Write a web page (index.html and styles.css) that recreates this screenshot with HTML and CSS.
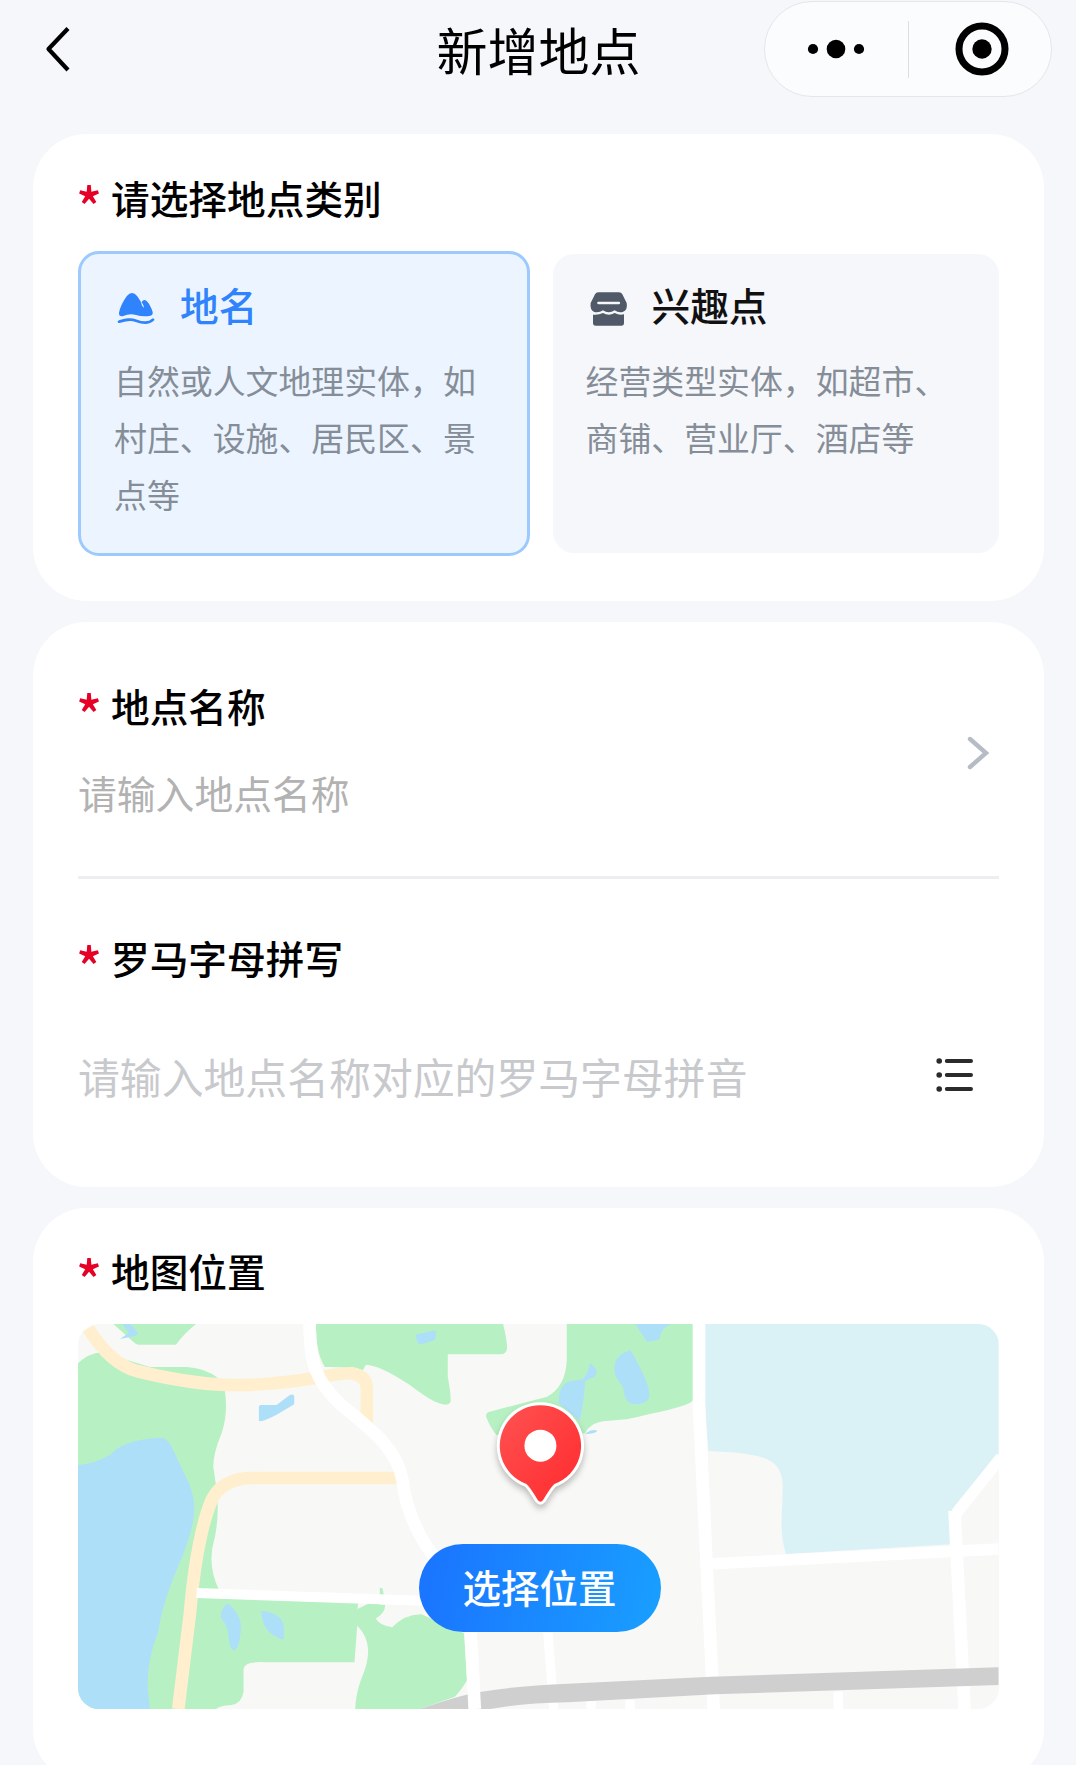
FILE: index.html
```html
<!DOCTYPE html>
<html lang="zh-CN">
<head>
    <meta charset="UTF-8">
    <meta name="viewport" content="width=device-width, initial-scale=1.0">
    <title>新增地点</title>
    <link rel="stylesheet" href="styles.css">
</head>
<body>
    <div class="page">
        <header class="navbar">
            <svg class="back" viewBox="0 0 40 60">
                <path d="M31 9.5L11.5 30L31 51" />
            </svg>
            <h1>新增地点</h1>
            <div class="capsule">
                <svg class="capsule-more" viewBox="0 0 60 60">
                    <circle cx="7" cy="30" r="5.1" />
                    <circle cx="30" cy="30" r="9.3" />
                    <circle cx="53" cy="30" r="5.1" />
                </svg>
                <span class="capsule-line"></span>
                <svg class="capsule-close" viewBox="0 0 60 60">
                    <circle class="ring" cx="30" cy="30" r="23" />
                    <circle cx="30" cy="30" r="9.7" />
                </svg>
            </div>
        </header>

        <section class="card card-type">
            <h2 class="label"><span class="required">*</span>请选择地点类别</h2>
            <div class="types">
                <div class="type active">
                    <div class="type-title">
                        <svg class="type-icon" viewBox="42 37 132 132">
                            <path d="M57 129Q62 105 80 80Q96 60 112 80L123 97Q126 112 132 114Q131 106 125 98Q130 87 139 93Q151 104 158 127Q160 138 148 139Q125 141 108 136Q88 131 70 139Q56 142 57 129Z" />
                            <path class="wave" d="M57 156C75 151 90 146 108 153S145 164 159 150" />
                        </svg>
                        <h3>地名</h3>
                    </div>
                    <p>自然或人文地理实体，如村庄、设施、居民区、景点等</p>
                </div>
                <div class="type">
                    <div class="type-title">
                        <svg class="type-icon" viewBox="45 37 132 132">
                            <path d="M82 68H144Q151 68 154 74L167 100Q171 121 155 127Q142 130 131 122Q113 134 96 122Q84 130 70 127Q56 121 59 100L72 74Q75 68 82 68Z" />
                            <path d="M66 135Q82 137 96 130Q113 140 131 130Q145 138 159 134V160Q159 168 151 168H74Q66 168 66 160Z" />
                            <path class="slot" d="M82 100H144" />
                        </svg>
                        <h3>兴趣点</h3>
                    </div>
                    <p>经营类型实体，如超市、商铺、营业厅、酒店等</p>
                </div>
            </div>
        </section>

        <section class="card card-name">
            <div class="field">
                <div>
                    <h2 class="label"><span class="required">*</span>地点名称</h2>
                    <div class="placeholder">请输入地点名称</div>
                </div>
                <svg class="arrow" viewBox="0 0 40 48">
                    <path d="M11 10L27 24L11 38" />
                </svg>
            </div>
            <h2 class="label label-roman"><span class="required">*</span>罗马字母拼写</h2>
            <div class="input-row">
                <input type="text" placeholder="请输入地点名称对应的罗马字母拼音">
                <svg class="list-icon" viewBox="0 0 44 44">
                    <circle cx="6.2" cy="8" r="2.8" />
                    <circle cx="6.2" cy="22" r="2.8" />
                    <circle cx="6.2" cy="36" r="2.8" />
                    <path d="M13.8 8H38M13.8 22H38M13.8 36H38" />
                </svg>
            </div>
        </section>

        <section class="card card-map">
            <h2 class="label"><span class="required">*</span>地图位置</h2>
            <div class="map">
                <svg class="map-image" viewBox="54 312 2763 1155" preserveAspectRatio="none">
                    <defs>
                        <linearGradient id="pinFill" x1="0" y1="0" x2="1" y2="1">
                            <stop offset="0" stop-color="#ff5252" />
                            <stop offset="1" stop-color="#ff2a2d" />
                        </linearGradient>
                    </defs>

                    <!-- 绿地 -->
                    <g class="green">
                        <path d="M160 312L225 370Q230 374 236 374H348Q370 343 408 312Z" />
                        <path d="M54 430Q85 400 125 397L270 441H380Q440 445 475 475L495 512Q505 580 485 640Q460 700 460 740Q470 800 473 850Q475 900 465 950Q440 1030 475 1105V1135L895 1148L893 1167L930 1149L976 1155Q976 1180 948 1195Q955 1215 997 1222Q1035 1183 1085 1183L1213 1240L1222 1380Q1205 1410 1185 1430L1080 1467H886Q888 1420 905 1375Q925 1330 925 1290Q922 1245 892 1217L884 1327H620Q550 1322 551 1350V1415Q545 1450 515 1455Q480 1457 468 1467H54Z" />
                        <path d="M768 312H1330Q1342 360 1342 385Q1340 403 1322 403H1164V470Q1175 530 1172 545Q1165 562 1130 547Q1110 540 1050 495Q960 435 918 434L910 450Q860 440 795 441Q768 400 768 312Z" />
                        <path d="M1521 312V420Q1518 500 1462 530L1290 575Q1277 578 1279 590Q1290 620 1310 645L1576 640Q1590 610 1630 604L1700 598Q1740 590 1770 582Q1895 557 1900 540V312Z" />
                        <path d="M960 1103L968 1105L972 1125H960Z" />
                    </g>

                    <!-- 水域 -->
                    <g class="water">
                        <path d="M54 735Q100 733 150 705Q190 658 300 653Q320 652 335 680L385 785Q410 840 400 900Q390 960 350 1050Q305 1160 295 1235Q258 1330 264 1410L270 1467H54Z" />
                        <path d="M180 357L207 338L187 312H212L235 340L228 347Z" />
                        <path d="M597 560Q597 555 603 555H650L690 525Q703 520 703 532V553L650 584Q620 600 602 604Q597 604 597 600Z" />
                        <path d="M1068 352Q1067 343 1075 342L1118 332Q1130 330 1129 340L1127 355Q1126 361 1118 363L1085 373Q1075 374 1074 368Z" />
                        <path d="M500 1151Q480 1170 483 1195Q502 1215 505 1240Q508 1290 522 1291Q542 1285 543 1215Q540 1185 515 1160Q508 1150 500 1151Z" />
                        <path d="M604 1172Q672 1180 672 1225V1258Q665 1261 650 1250C620 1238 605 1210 604 1172Z" />
                        <path d="M1727 312L1762 365Q1795 364 1800 355Q1803 325 1834 312Z" />
                        <path d="M1712 390Q1664 405 1664 445C1664 475 1680 485 1689 500C1696 520 1690 553 1733 553Q1772 550 1769 520Q1765 480 1712 390Z" />
                        <path d="M1591 430Q1622 450 1604 472Q1580 478 1576 487Q1574 540 1560 602L1497 550Q1495 500 1525 485L1568 478Q1584 465 1591 430Z" />
                        <path d="M1576 642Q1595 625 1613 632Q1610 641 1576 642Z" />
                    </g>
                    <path class="lake" d="M1920 312H2817V702L2672 973L2179 1002C2155 920 2172 870 2169 790C2165 710 2100 700 1946 693Z" />

                    <!-- 道路 -->
                    <g class="road-yellow">
                        <path d="M85 325Q150 430 230 453Q380 490 500 495Q620 498 760 475C830 464 850 458 875 460Q921 468 921 505V625" />
                        <path d="M1010 774H600Q490 768 455 840Q410 950 390 1180L355 1467" />
                    </g>
                    <g class="land">
                        <path d="M2700 867L2817 712V972L2700 975Z" />
                    </g>
                    <g class="road-white">
                        <path d="M749 312C751 420 760 480 850 560C950 640 1010 690 1028 780Q1043 910 1130 1020" />
                        <path d="M1918 312V560L1962 1467" />
                        <path d="M1464 1230L1482 1467" stroke-width="28" />
                        <path d="M1594 1440V1467M1711 1440V1467M2336 1415V1467" stroke-width="28" />
                        <path d="M410 1119L1090 1142" stroke-width="30" />
                        <path d="M1945 1032L2817 987" stroke-width="34" />
                        <path d="M2685 872L2715 1467" />
                        <path d="M2690 880L2825 712" stroke-width="34" />
                    </g>
                    <path class="railway" d="M1080 1467Q1200 1425 1265 1415Q1380 1397 1525 1391L1954 1370L2817 1342V1395L1967 1423L1525 1447Q1380 1450 1291 1467Z" />
                    <path class="road-front" d="M1232 1230L1245 1467" />

                    <g class="pin">
                        <path d="M1400 792A122 122 0 1 1 1484 792Q1474 800 1450 840Q1442 850 1434 840Q1410 800 1400 792Z" />
                        <circle cx="1442" cy="677" r="48" />
                    </g>
                </svg>
                <button class="map-button">选择位置</button>
            </div>
        </section>
    </div>
</body>
</html>
```
FILE: styles.css
```css
:root {
    --page-bg: #f5f7fa;
    --blue: #2f83fd;
    --gray-text: #858d98;
}

* {
    box-sizing: border-box;
}

body {
    margin: 0;
    background: #fff;
    color: #000;
    font-family: 'Noto Sans CJK SC', sans-serif;
}

h1, h2, h3, p {
    margin: 0;
    font-weight: 400;
}

svg {
    display: block;
}

.page {
    width: 1076px;
    height: 1765px;
    padding: 0 33px;
    background: var(--page-bg);
    overflow: hidden;
}

/* 顶部导航 */
.navbar {
    display: grid;
    grid-template-columns: 399.5px 1fr auto;
    align-items: center;
    height: 98px;
    margin: 0 -9px 36px 4px;
}

.navbar h1 {
    padding-bottom: 1px;
    font-size: 51px;
    line-height: 74px;
}

.back {
    width: 40px;
    height: 60px;
    fill: none;
    stroke: #000;
    stroke-width: 4.2;
    stroke-linejoin: round;
}

.capsule {
    display: flex;
    align-items: center;
    justify-self: end;
    width: 288px;
    height: 96px;
    padding: 0 39px 0 41px;
    border: 1.5px solid #e4e6e9;
    border-radius: 48px;
    background: #fbfcfe;
}

.capsule svg {
    width: 60px;
    height: 60px;
}

.capsule-line {
    width: 1px;
    height: 57px;
    margin: 0 43px 0 42px;
    background: #dcdee1;
}

.ring {
    fill: none;
    stroke: #000;
    stroke-width: 7;
}

/* 卡片 */
.card {
    width: 1010.5px;
    padding: 0 45px;
    margin-bottom: 21px;
    border-radius: 54px;
    background: #fff;
}

.card-type {
    height: 467px;
    padding-top: 35px;
}

.card-name {
    height: 565px;
    padding-top: 55px;
}

.card-map {
    height: 575px;
    padding-top: 34px;
}

.label {
    display: flex;
    font-size: 38.7px;
    font-weight: 500;
    line-height: 56px;
}

.required {
    width: 33px;
    height: 56px;
    padding-top: 8px;
    color: #e60026;
    font-size: 54px;
    font-weight: 500;
    text-indent: -2px;
}

.types {
    display: grid;
    grid-template-columns: 452px 1fr;
    gap: 22.5px;
    align-items: center;
    height: 305px;
    margin-top: 26px;
}

.type {
    height: 299px;
    padding: 25px 33px 0;
    border-radius: 21px;
    background: var(--page-bg);
}

.type.active {
    height: 305px;
    border: 3px solid #9ccafd;
    background: #ecf5ff;
}

.type-title {
    display: flex;
    align-items: center;
    gap: 22px;
    height: 50px;
    margin-bottom: 23px;
}

.type-title h3 {
    color: #111;
    font-size: 38.7px;
    font-weight: 500;
    line-height: 50px;
}

.type.active h3 {
    color: var(--blue);
}

.type-icon {
    width: 44px;
    height: 44px;
    fill: #505967;
}

.active .type-icon {
    fill: var(--blue);
}

.type-icon .wave {
    fill: none;
    stroke: var(--blue);
    stroke-width: 8;
    stroke-linecap: round;
}

.slot {
    stroke: var(--page-bg);
    stroke-width: 7;
    stroke-linecap: round;
}

.type p {
    color: var(--gray-text);
    font-size: 32.9px;
    line-height: 56.8px;
}

/* 名称 */
.field {
    display: flex;
    align-items: center;
    justify-content: space-between;
    padding-bottom: 56px;
    border-bottom: 3px solid #ededf2;
}

.placeholder {
    margin-top: 31px;
    color: #b2b2b2;
    font-size: 38.8px;
    line-height: 56px;
}

.arrow {
    width: 40px;
    height: 48px;
    margin-top: 8px;
    fill: none;
    stroke: #b6bcc5;
    stroke-width: 4.4;
    stroke-linecap: round;
}

.label-roman {
    margin-top: 50px;
}

.input-row {
    display: flex;
    align-items: center;
    height: 60px;
    margin-top: 60px;
    padding-right: 22px;
}

.input-row input {
    flex: 1;
    height: 60px;
    padding: 0;
    border: none;
    outline: none;
    background: none;
    font-family: inherit;
    font-size: 41.85px;
}

.input-row input::placeholder {
    color: #c8c9cc;
}

.list-icon {
    width: 44px;
    height: 44px;
    fill: #2b2b2b;
    stroke: none;
}

.list-icon path {
    stroke: #2b2b2b;
    stroke-width: 4;
    stroke-linecap: round;
}

/* 地图 */
.map {
    position: relative;
    height: 385px;
    margin-top: 26px;
    border-radius: 21px;
    background: #f8f8f6;
    overflow: hidden;
}

.map-image {
    width: 100%;
    height: 100%;
}

.green {
    fill: #b7f1c3;
}

.water {
    fill: #addff9;
}

.lake {
    fill: #daf1f5;
}

.land {
    fill: #f8f8f6;
}

.road-yellow {
    fill: none;
    stroke: #ffefcf;
    stroke-width: 38;
}

.road-white,
.road-front {
    fill: none;
    stroke: #fff;
    stroke-width: 38;
}

.railway {
    fill: #cfcfcf;
}

.pin {
    filter: drop-shadow(0 12px 10px rgba(0, 0, 0, 0.25));
}

.pin path {
    fill: url(#pinFill);
    stroke: #fff;
    stroke-width: 18;
    stroke-linejoin: round;
    paint-order: stroke;
}

.pin circle {
    fill: #fff;
}

.map-button {
    position: absolute;
    left: 340.5px;
    bottom: 77px;
    width: 242px;
    height: 88px;
    padding: 0 0 4px;
    border: none;
    border-radius: 44px;
    background: linear-gradient(100deg, #1a73ff, #199fff);
    color: #fff;
    font-family: inherit;
    font-size: 38.5px;
    font-weight: 500;
}
```
